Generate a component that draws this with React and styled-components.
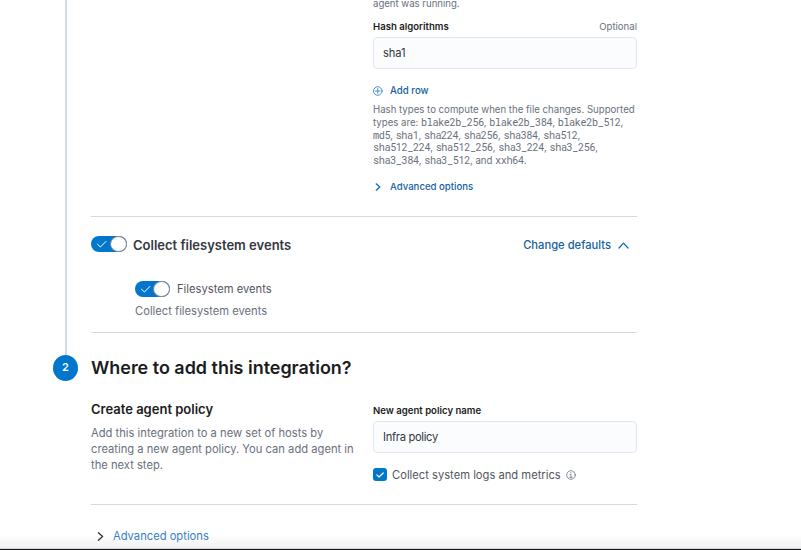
import React from "react";
import styled, { createGlobalStyle } from "styled-components";

const Global = createGlobalStyle`
  *{box-sizing:border-box}
  html,body{margin:0;background:#fff;overflow:hidden}
  body{font-family:Inter,sans-serif;font-size:11.2px;color:#343741}
`;
const Page = styled.main`
  width:801px;height:550px;overflow:hidden;display:flex;flex-direction:column;
  background:linear-gradient(#fff 535px,#f0f0f0 548px,#d8d8d8 548px);border-bottom:1px solid #111216;
`;
const Step = styled.section`
  display:grid;grid-template-columns:38px 546px;column-gap:0;padding-left:53px;height:${p => p.$h}px;flex:none;
`;
const Rail = styled.div`width:2px;height:100%;margin-left:12px;background:#d3dae6;`;
const Badge = styled.div`
  width:25px;height:26px;border-radius:50%;background:#0077cc;color:#fff;
  display:flex;align-items:center;justify-content:center;font-size:11px;font-weight:600;line-height:24px;padding-bottom:2px;
`;
const Body = styled.div`display:flex;flex-direction:column;min-width:0;`;
const Section = styled.div`height:${p => p.$h}px;flex:none;border-bottom:1px solid #d3dae6;padding:${p => p.$pad || 0};`;
const Split = styled.div`display:grid;grid-template-columns:282px 264px;`;
const Text = styled.div`
  font-size:${p => p.$size || 11.2}px;line-height:${p => p.$lh || 16}px;font-weight:${p => p.$w || 400};
  color:${p => p.$c || "#343741"};letter-spacing:${p => p.$ls || 0}px;white-space:nowrap;
  margin:${p => p.$m || 0};
`;
const Line = styled.span`display:block;height:12.8px;`;
const Paragraph = styled(Text)`white-space:pre-line;`;
const Code = styled.code`font-family:"Roboto Mono","Liberation Mono",monospace;font-size:10.2px;line-height:1;letter-spacing:-0.4px;`;
const LabelRow = styled.div`display:flex;justify-content:space-between;`;
const Input = styled.div`
  height:32px;border:1px solid #e3e6f0;border-radius:4px;background:#fbfcfd;padding:0 9px;display:flex;align-items:center;
  margin:${p => p.$m || 0};
`;
const Row = styled.div`display:flex;align-items:center;gap:${p => p.$gap || 0}px;margin:${p => p.$m || 0};height:${p => p.$h || 16}px;`;
const Spread = styled(Row)`justify-content:space-between;`;
const Track = styled.div`
  width:${p => p.$w}px;height:16px;border-radius:8px;background:#0077cc;display:flex;align-items:center;justify-content:space-between;padding-left:5px;flex:none;
`;
const Thumb = styled.div`width:17px;height:16px;border-radius:50%;background:#fff;border:1px solid #858b98;`;
const Check = styled.div`width:14px;height:13px;border-radius:3px;background:#0077cc;display:flex;align-items:center;justify-content:center;flex:none;margin-top:-1px;`;
const Svg = styled.svg`display:block;flex:none;fill:none;stroke:${p => p.$c};stroke-width:${p => p.$sw || 1.2};stroke-linecap:round;stroke-linejoin:round;`;

const Chevron = ({ c = "#006bb8", w = 6, h = 8, sw }) => <Svg $c={c} $sw={sw} width={w} height={h} viewBox="0 0 6 8"><path d="M1.2 .8 4.8 4 1.2 7.2" /></Svg>;
const Switch = ({ w = 36 }) => (
  <Track $w={w}><Svg $c="#fff" $sw={1} width="12" height="9" viewBox="0 0 12 9"><path d="M1.5 4.2 4.4 7 10 1.4" /></Svg><Thumb /></Track>
);

const BLUE = "#155f9f";
const GREY = "#69707d";

export default function App() {
  return (
    <>
      <Global />
      <Page>
        <Step $h={355}>
          <Rail />
          <Body>
            <Section $h={217}>
              <Split>
                <div />
                <div>
                  <Text $size={9.6} $lh={8} $c={GREY}>agent was running.</Text>
                  <LabelRow>
                    <Text $size={9.6} $w={600} $lh={14} $c="#1a1c21" $m="12px 0 0">Hash algorithms</Text>
                    <Text $size={9.6} $lh={14} $c={GREY} $m="12px 0 0">Optional</Text>
                  </LabelRow>
                  <Input $m="3px 0 0"><Text $ls={-0.1}>sha1</Text></Input>
                  <Row $m="14px 0 0" $gap={7}>
                    <Svg $c="#3585bf" $sw={0.9} width="10" height="10" viewBox="0 0 10 10"><circle cx="4.8" cy="5" r="4.3" /><path d="M2.5 5h4.6M4.8 2.7v4.6" /></Svg>
                    <Text $size={9.7} $w={500} $c={BLUE}>Add row</Text>
                  </Row>
                  <Text $size={9.65} $lh={12.8} $c={GREY} $m="5px 0 0">
                    <Line>Hash types to compute when the file changes. Supported</Line>
                    <Line>types are: <Code>blake2b_256</Code>, <Code>blake2b_384</Code>, <Code>blake2b_512</Code>,</Line>
                    <Line><Code>md5</Code>, <Code>sha1</Code>, <Code>sha224</Code>, <Code>sha256</Code>, <Code>sha384</Code>, <Code>sha512</Code>,</Line>
                    <Line><Code>sha512_224</Code>, <Code>sha512_256</Code>, <Code>sha3_224</Code>, <Code>sha3_256</Code>,</Line>
                    <Line><Code>sha3_384</Code>, <Code>sha3_512</Code>, and <Code>xxh64</Code>.</Line>
                  </Text>
                  <Row $m="11px 0 0 2px" $gap={9}>
                    <Chevron />
                    <Text $size={9.6} $w={500} $c={BLUE}>Advanced options</Text>
                  </Row>
                </div>
              </Split>
            </Section>
            <Section $h={116} $pad="18px 0 0">
              <Spread $h={18}>
                <Row $gap={6}><Switch /><Text $size={13} $w={600} $lh={18} $m="2px 0 0">Collect filesystem events</Text></Row>
                <Row $gap={7} $m="0 8px 0 0">
                  <Text $w={500} $c={BLUE} $m="2px 0 0">Change defaults</Text>
                  <Svg $c="#006bb8" width="11" height="9" viewBox="0 -2 11 9"><path d="M1 6 5.5 1.2 10 6" /></Svg>
                </Row>
              </Spread>
              <Row $m="28px 0 0 44px" $gap={7}><Switch w={35} /><Text $c="#53565f">Filesystem events</Text></Row>
              <Text $c={GREY} $m="6px 0 0 44px">Collect filesystem events</Text>
            </Section>
          </Body>
        </Step>
        <Step $h={193}>
          <Badge>2</Badge>
          <Body>
            <Section $h={150}>
              <Text as="h2" $size={17.95} $w={600} $lh={26} $c="#1a1c21">Where to add this integration?</Text>
              <Split>
                <div>
                  <Text as="h3" $size={13} $w={600} $lh={18} $c="#1a1c21" $m="19px 0 0">Create agent policy</Text>
                  <Paragraph $c={GREY} $m="7px 0 0">
                    {"Add this integration to a new set of hosts by\ncreating a new agent policy. You can add agent in\nthe next step."}
                  </Paragraph>
                </div>
                <div>
                  <Text $size={9.6} $w={600} $lh={14} $c="#1a1c21" $m="23px 0 0">New agent policy name</Text>
                  <Input $m="3px 0 0"><Text $ls={-0.33}>Infra policy</Text></Input>
                  <Row $m="14px 0 0" $gap={5}>
                    <Check><Svg $c="#fff" width="8" height="6" viewBox="0 0 8 6"><path d="M.8 2.8 3 5 7.2 1" /></Svg></Check>
                    <Text $c="#53565f">Collect system logs and metrics</Text>
                    <Svg $c={GREY} $sw={0.8} width="10" height="10" viewBox="0 0 10 10"><circle cx="5" cy="5" r="4.3" /><path d="M4 4.3h1v3M3.8 7.3h2.4M5 2.4v.3" /></Svg>
                  </Row>
                </div>
              </Split>
            </Section>
            <Row $m="23px 0 0 6px" $gap={9}>
              <Chevron c="#343741" w={7} h={11} />
              <Text $c="#3580c4">Advanced options</Text>
            </Row>
          </Body>
        </Step>
      </Page>
    </>
  );
}
